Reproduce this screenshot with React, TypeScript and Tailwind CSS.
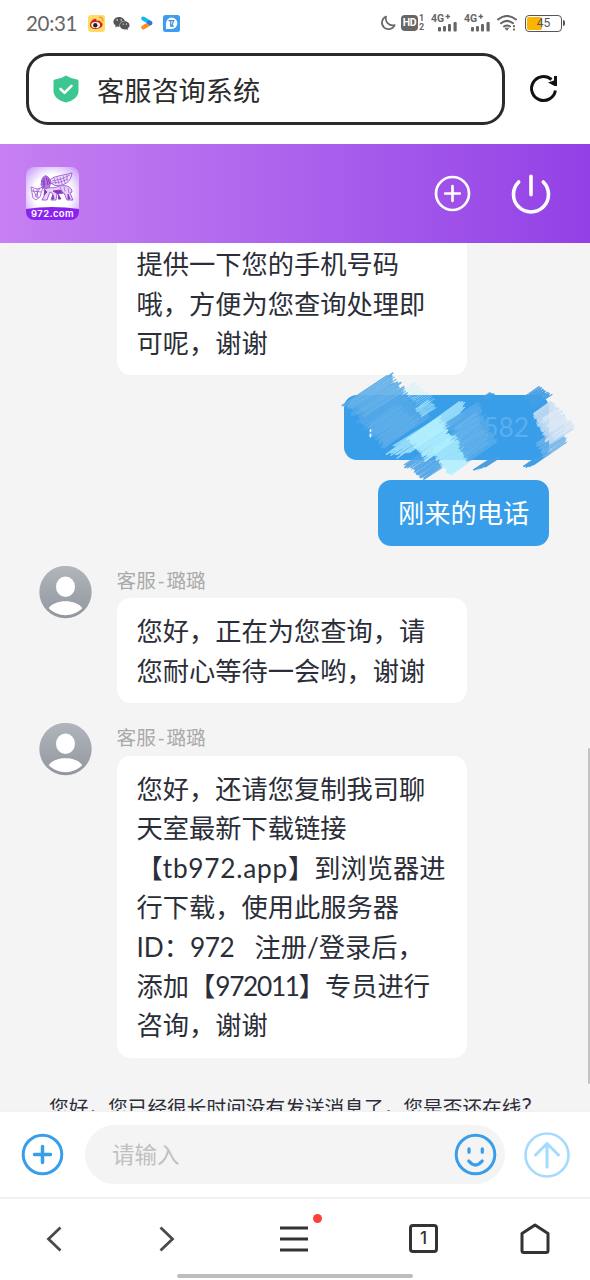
import type { ReactNode } from "react";
import { FaWeibo, FaWeixin } from "react-icons/fa";

const messages: ReactNode[][] = [
  ["您好，正在为您查询，请", "您耐心等待一会哟，谢谢"],
  [
    "您好，还请您复制我司聊",
    "天室最新下载链接",
    <>【<span className="tracking-[0.75px]">tb972.app</span>】到浏览器进</>,
    "行下载，使用此服务器",
    <>ID：<span className="tracking-[-0.5px]">972</span>{"   "}注册/登录后，</>,
    <>添加【<span className="tracking-[-1.3px]">972011</span>】专员进行</>,
    "咨询，谢谢",
  ],
];

// x, y = start of the patch centre line, x2, y2 = its end; h1, h2 = half stroke lengths
const patches = [
  { x: 31, y: 21, x2: 71, y2: 64, h1: 30, h2: 29, n: 80, w: 2, color: "#55a9e8", o: 0.9 },
  { x: 44, y: 48, x2: 66, y2: 66, h1: 22, h2: 24, n: 30, w: 1.2, color: "#6fb8ee", o: 0.45 },
  { x: 30, y: 22, x2: 48, y2: 36, h1: 26, h2: 26, n: 20, w: 1, color: "#86c3ee", o: 0.5 },
  { x: 80, y: 89, x2: 98, y2: 105, h1: 16, h2: 12, n: 26, w: 1.8, color: "#4fa6e8", o: 0.95 },
  { x: 72, y: 19, x2: 92, y2: 35, h1: 8, h2: 9, n: 16, w: 0.9, color: "#b9f0fb", o: 0.7 },
  { x: 86, y: 37, x2: 93, y2: 44, h1: 9, h2: 9, n: 9, w: 1.6, color: "#9ee0fb", o: 0.8 },
  { x: 89, y: 58, x2: 96, y2: 69, h1: 48, h2: 38, n: 24, w: 1.7, color: "#9fe2fb", o: 0.9 },
  { x: 88, y: 60, x2: 104, y2: 82, h1: 20, h2: 18, n: 36, w: 2, color: "#b4f1ff", o: 0.9 },
  { x: 108, y: 74, x2: 124, y2: 100, h1: 17, h2: 13, n: 36, w: 1.9, color: "#aeeeff", o: 0.85 },
  { x: 126, y: 45, x2: 146, y2: 84, h1: 20, h2: 18, n: 60, w: 1.9, color: "#58abe9", o: 0.9 },
  { x: 130, y: 52, x2: 142, y2: 82, h1: 15, h2: 15, n: 24, w: 0.9, color: "#8ccbf3", o: 0.5 },
  { x: 145, y: 97, x2: 157, y2: 94, h1: 11, h2: 9, n: 9, w: 1.7, color: "#4a9fe0", o: 1 },
  { x: 150, y: 27, x2: 154, y2: 29, h1: 5, h2: 5, n: 5, w: 1.5, color: "#429fe5", o: 1 },
  { x: 195, y: 24, x2: 206, y2: 33, h1: 10, h2: 12, n: 14, w: 1.8, color: "#449fe5", o: 1 },
  { x: 194, y: 94, x2: 206, y2: 91, h1: 10, h2: 12, n: 8, w: 1.7, color: "#429fe5", o: 1 },
  { x: 214, y: 66, x2: 219, y2: 82, h1: 18, h2: 14, n: 18, w: 1.5, color: "#6fb3ea", o: 0.9 },
  { x: 206, y: 40, x2: 226, y2: 68, h1: 12, h2: 17, n: 52, w: 1.7, color: "#c9dff3", o: 0.9 },
  { x: 214, y: 46, x2: 229, y2: 64, h1: 12, h2: 13, n: 22, w: 1, color: "#eaf1f7", o: 0.7 },
];

function noise(i: number) {
  const v = Math.sin(i * 127.1 + 31.7) * 43758.5453;
  return v - Math.floor(v);
}

function Scribble() {
  return (
    <svg className="absolute -left-2 -top-[27px] pointer-events-none" width="245" height="116" viewBox="0 0 245 116" fill="none" strokeLinecap="round">
      {patches.map((p, k) => (
        <g key={k} stroke={p.color} opacity={p.o}>
          {Array.from({ length: p.n }).map((_, i) => {
            const t = i / (p.n - 1);
            const s = k * 100 + i;
            const len = p.h1 + (p.h2 - p.h1) * t;
            const a = len * (0.7 + 0.3 * noise(s));
            const b = len * (0.7 + 0.3 * noise(s + 50));
            const dy = 0.52 + 0.1 * noise(s + 23);
            const cx = p.x + (p.x2 - p.x) * t;
            const cy = p.y + (p.y2 - p.y) * t;
            return (
              <path
                key={i}
                strokeWidth={p.w * (0.5 + 0.6 * noise(s + 77))}
                d={`M${cx - a * 0.84} ${cy + a * dy}L${cx + b * 0.84} ${cy - b * dy}`}
              />
            );
          })}
        </g>
      ))}
      <path d="M34.500 62v1M34.500 66.500v2" stroke="#e8f6ff" strokeWidth="1.800" />
    </svg>
  );
}

function Signal() {
  return (
    <div className="relative w-[27px] h-[18px] font-bold font-['Roboto',sans-serif]">
      <span className="absolute left-0 -top-[1px] text-[10.5px] leading-[12px]">4G</span>
      <svg className="absolute left-0 top-0" width="27" height="18" fill="#666">
        <path d="M14.500 2.500h4.600M16.800 .2v4.600" stroke="#666" strokeWidth="1.400" />
        <rect x="7" y="13" width="3" height="4.500" rx="1" />
        <rect x="12" y="12" width="3" height="5.500" rx="1" />
        <rect x="17" y="10" width="3" height="7.500" rx="1" />
        <rect x="22.500" y="8" width="3.200" height="9.500" rx="1" />
      </svg>
    </div>
  );
}

function StatusBar() {
  return (
    <div className="h-[46px] shrink-0 pl-[26px] pr-[28px] flex items-center text-[#666]">
      <span className="w-[62px] text-[20.5px] leading-none tracking-[-0.3px] font-['Lato',sans-serif]">20:31</span>
      <div className="w-[17px] h-[17px] rounded-[3px] bg-[#ffdc65] flex items-center justify-center">
        <svg width="15" height="14" viewBox="0 0 15 14">
          <path d="M1 9C1 5.500 5 2 7 3Q8 3.500 7.500 5Q11.500 3.500 11.500 6Q14 7 13.500 9C12.500 14 1 14.500 1 9z" fill="#d9201e" />
          <ellipse cx="6.700" cy="9" rx="4.400" ry="3.100" fill="#fff" />
          <circle cx="6.300" cy="9.200" r="2.200" fill="#222" />
          <path d="M10 1.200Q14.500 1.200 13.800 5.500" fill="none" stroke="#f29a2c" strokeWidth="1.300" />
        </svg>
      </div>
      <FaWeixin className="ml-[8px]" size={17} color="#555" />
      <svg className="ml-[11px]" width="12" height="14" viewBox="0 0 12 14" fill="none" strokeWidth="4" strokeLinecap="round">
        <path d="M2.200 11.500l7-4.300" stroke="#ff8a1e" />
        <path d="M2.200 2.500l7 4.300" stroke="#19b5f5" />
        <path d="M8 6.500l1.300.6" stroke="#2878e6" />
      </svg>
      <svg className="ml-[10px]" width="17" height="17" viewBox="0 0 17 17">
        <rect width="17" height="17" rx="2.500" fill="#3f9df1" />
        <path d="M3 14V8.500a5.700 5.700 0 1 1 5.700 5.500z" fill="#fff" />
        <path d="M5.500 5.700h2.200V11M7 11.200h4M8.200 5.700h2.600L8.600 11" stroke="#3f8fe0" strokeWidth="1.200" fill="none" />
      </svg>

      <svg className="ml-auto" width="16" height="16" viewBox="0 0 16 16" fill="none" stroke="#666" strokeWidth="1.700" strokeLinejoin="round">
        <path d="M6 1.500A6.600 6.600 0 1 0 14.700 10A7 7 0 0 1 6 1.500z" />
      </svg>
      <div className="ml-[5px] w-[17px] h-[16px] rounded-[4px] bg-[#666] text-white text-[10.5px] leading-[16px] text-center font-bold tracking-[-0.3px] font-['Roboto',sans-serif]">HD</div>
      <div className="ml-[1px] w-[6px] flex flex-col text-[9px] leading-[9px] font-bold font-['Roboto',sans-serif]">
        <span>1</span>
        <span>2</span>
      </div>
      <div className="ml-[6px]"><Signal /></div>
      <div className="ml-[6px]"><Signal /></div>
      <svg className="ml-[6px]" width="20" height="16" viewBox="0 0 20 16" fill="none" stroke="#666" strokeWidth="2" strokeLinecap="round">
        <path d="M1 4.500Q10-2.600 19 4.500M4 8.200Q10 3.500 16 8.200M7 11.500Q10 9.300 13 11.500" />
        <path d="M8.500 13.200h3L10 15z" fill="#666" strokeWidth="1" />
        <path d="M17 11.200v.1M17 14.500v.1" strokeWidth="2.200" />
      </svg>
      <div className="ml-[8px] relative w-[37px] h-[17px] rounded-[4px] border-[1.5px] border-[#555] p-[1px] shrink-0">
        <div className="w-[15px] h-full bg-[#fbb400] rounded-[2px]" />
        <span className="absolute inset-0 text-center text-[12px] leading-[14px] text-[#555] font-['Roboto',sans-serif]">45</span>
        <span className="absolute -right-[4px] top-[4px] w-[2px] h-[6px] bg-[#555] rounded-r" />
      </div>
    </div>
  );
}

function Logo() {
  return (
    <div className="relative w-[53px] h-[53px] rounded-[8px] overflow-hidden bg-radial from-white from-50% to-[#c08af7]">
      <svg className="absolute inset-0" width="53" height="53" viewBox="0 0 53 53" fill="none" stroke="#9a52d2" strokeWidth="0.900" strokeLinejoin="round">
        <path d="M23 15C25 9 35 9 46 6C45 14 40 19 29 18.500z" fill="#efe2fa" />
        <path d="M26 14Q36 13 44 8M26 16Q35 16 42 12M28 11L30 17M31 10l2 7M34 10L36 17M37 9l2 7M41 8L41 14" strokeWidth="0.700" />
        <path d="M16 12q3-6 7-1l2 4-2 6-4 2-4-5z" fill="#b77be0" />
        <path d="M15.500 14l3 1M16.500 17h3M20 10l2 8M22 12l2 5M18 11v10" stroke="#7d2fb8" />
        <path d="M18 23C22 19 27 22 31 20C38 17 46 19 46 25L44 26 47 33H41L38 26 31 27 30 33H25L27 27 24 25 21 33H16L19 27z" fill="#e8d3f7" />
        <path d="M27 24l4 2.500 6-1-3-2.500zM32 27l3 5h-3M19 23l-1 5 3-3zM27 28l-1 4h2zM42 27l2 5h-2z" fill="#8434c4" stroke="#8434c4" />
        <path d="M34 20l2 4M38 19.500l1 5M42 21l1 5" strokeWidth="0.700" />
        <path d="M5 20l6 2 6-2-3 10-4 3-3-2zM7 22l4 9M11 22l1 9M14 21l-5 9M6 24l9 1" strokeWidth="0.800" />
      </svg>
      <svg className="absolute inset-0" width="53" height="53" viewBox="0 0 53 53">
        <path d="M0 42Q26 38 53 42V53H0z" fill="#8a22ef" />
      </svg>
      <span className="absolute left-0 right-0 bottom-0 text-center text-white text-[9.5px] leading-[12px] font-semibold tracking-[0.4px] font-['Inter',sans-serif]">972.com</span>
    </div>
  );
}

function Avatar() {
  return (
    <svg className="shrink-0" width="53" height="53" viewBox="0 0 53 53">
      <defs>
        <linearGradient id="avatar" x1="0" y1="0" x2="0" y2="1">
          <stop stopColor="#b1b5bc" />
          <stop offset="1" stopColor="#92979f" />
        </linearGradient>
      </defs>
      <circle cx="26.500" cy="26" r="26.200" fill="url(#avatar)" />
      <ellipse cx="26.500" cy="20.700" rx="9.500" ry="10.300" fill="#fff" />
      <path d="M9.700 42C16 33 37 33 43.300 42C35 51.500 18 51.500 9.700 42z" fill="#fff" />
    </svg>
  );
}

function Lines({ lines }: { lines: ReactNode[] }) {
  return (
    <>
      {lines.map((line, i) => (
        <div key={i} className="whitespace-pre">{line}</div>
      ))}
    </>
  );
}

export default function App() {
  return (
    <div className="w-[590px] h-[1280px] overflow-hidden bg-white flex flex-col font-['Lato','Noto_Sans_CJK_SC',sans-serif]">
      <StatusBar />

      <div className="h-[98.300px] shrink-0 pl-[26px] pt-[7px] flex items-start">
        <div className="w-[479px] h-[72px] rounded-[22px] border-[3px] border-[#2b2b2b] flex items-center pl-[24px]">
          <svg width="26" height="28" viewBox="0 0 26 28">
            <path d="M13 .5Q18 3.800 24 4.500Q25.500 4.700 25.500 6V16C25.500 22 19.500 26 13 27.500C6.500 26 .5 22 .5 16V6Q.5 4.700 2 4.500Q8 3.800 13 .5z" fill="#3cc690" />
            <path d="M7.500 14l4 3.800 7-7" fill="none" stroke="#fff" strokeWidth="2.600" strokeLinecap="round" strokeLinejoin="round" />
          </svg>
          <span className="ml-[18px] pt-[3px] text-[27.2px] leading-none text-[#2b2b2b]">客服咨询系统</span>
        </div>
        <svg className="ml-[23px] mt-[20px]" width="30" height="32" viewBox="0 0 30 32" fill="none" stroke="#111" strokeWidth="3">
          <path d="M27.400 17.500A12 12 0 1 1 23.500 6.500" />
          <path d="M29 3v10h-2.500L20 9.500l6-2V3z" fill="#111" stroke="none" />
        </svg>
      </div>

      <header className="h-[98.500px] shrink-0 flex items-center px-[26px] bg-linear-to-r from-[#c77ff2] to-[#9340e6]">
        <Logo />
        <svg className="ml-auto" width="37" height="37" viewBox="0 0 37 37" fill="none" stroke="#fff" strokeWidth="2.700" strokeLinecap="round">
          <circle cx="18.500" cy="18.500" r="16.500" />
          <path d="M18.500 11.200v14.600M11.200 18.500h14.600" />
        </svg>
        <svg className="ml-[39px] mr-[12px]" width="42" height="42" viewBox="0 0 42 42" fill="none" stroke="#fff" strokeWidth="3.600" strokeLinecap="round">
          <path d="M21 3.300v18.500M8.700 9A17.500 17.500 0 1 0 33.300 9" />
        </svg>
      </header>

      <main className="relative h-[868.200px] shrink-0 overflow-hidden bg-[#f4f4f4] text-[26.25px] leading-[39.4px] text-[#2b2e38]">
        <div className="ml-[116.500px] w-[350.500px] h-[132.500px] rounded-b-[14px] bg-white pl-5 pt-[2.500px]">
          <Lines lines={["提供一下您的手机号码", "哦，方便为您查询处理即", "可呢，谢谢"]} />
        </div>

        <div className="mt-[19.500px] mr-[41px] flex flex-col items-end gap-5 text-white">
          <div className="relative w-[205px] h-[65.500px] rounded-[13px] bg-[#389eea] px-5 py-[13px] flex justify-between">
            <span className="text-[#3fa1ea]">1</span>
            <span className="text-[#5caeec]">582</span>
            <Scribble />
          </div>
          <div className="w-[171px] h-[65.500px] rounded-[13px] bg-[#389eea] pl-5 py-[14px] whitespace-nowrap">刚来的电话</div>
        </div>

        <div className="mt-5 flex flex-col gap-5">
          {messages.map((lines, i) => (
            <div key={i} className="pl-[39px] flex items-start gap-[24.5px]">
              <Avatar />
              <div>
                <div className="h-[32.700px] text-[19.7px] leading-[29px] text-[#aaa]">
                  客服<span className="inline-block w-[10.500px] text-center">-</span>璐璐
                </div>
                <div className="w-[350.500px] rounded-[14px] bg-white pl-5 pt-[14px] pb-[12px]">
                  <Lines lines={lines} />
                </div>
              </div>
            </div>
          ))}
        </div>

        <p className="mt-[35.500px] pl-[49px] text-[19.7px] leading-[29px] whitespace-nowrap">
          您好，您已经很长时间没有发送消息了，您是否还在线<span className="text-[23px] leading-none">?</span>
        </p>
        <div className="absolute right-0 top-[505px] w-[2px] h-[336px] rounded bg-[#c2c2c2]" />
      </main>

      <div className="h-[88px] shrink-0 bg-white border-t border-b-2 border-[#f1f1f1] flex items-center pl-[21px] pr-[19px] pt-[1px]">
        <svg width="43" height="43" viewBox="0 0 43 43" fill="none" stroke="#389eea" strokeWidth="3" strokeLinecap="round">
          <circle cx="21.500" cy="21.500" r="19.300" />
          <path d="M21.500 13.500v16M13.500 21.500h16" strokeWidth="3.500" />
        </svg>
        <div className="ml-[21px] w-[420px] h-[59px] rounded-full bg-[#f4f4f4] flex items-center justify-between pl-[27px] pr-[8px]">
          <span className="text-[22.5px] text-[#c0c0c0]">请输入</span>
          <svg width="43" height="43" viewBox="0 0 43 43" fill="none" stroke="#389eea" strokeWidth="3" strokeLinecap="round">
            <circle cx="21.500" cy="21.500" r="19.300" />
            <path d="M15 15.800v3.400M28.300 15.800v3.400M14.800 28Q21.500 36 28.200 28" strokeWidth="3.300" />
          </svg>
        </div>
        <svg className="ml-[19px]" width="46" height="46" viewBox="0 0 46 46" fill="none" stroke="#a5daff" strokeWidth="2.600" strokeLinecap="round" strokeLinejoin="round">
          <circle cx="23" cy="23" r="21.500" />
          <path d="M23 35V11.500M11.500 23L23 11.500 34.500 23" strokeWidth="3" />
        </svg>
      </div>

      <nav className="relative h-[81px] shrink-0 bg-white">
        <div className="h-[80px] flex items-center pl-[46px] pr-[40px] justify-between">
          <svg width="17" height="26" viewBox="0 0 17 26" fill="none" stroke="#4a4a4a" strokeWidth="2.800">
            <path d="M14.500 1.500L2.500 13l12 11.500" />
          </svg>
          <svg className="ml-[49px]" width="17" height="26" viewBox="0 0 17 26" fill="none" stroke="#4a4a4a" strokeWidth="2.800">
            <path d="M1.500 1.500L13.500 13 1.500 24.500" />
          </svg>
          <div className="relative ml-[57px]">
            <svg width="28" height="26" viewBox="0 0 28 26" stroke="#333" strokeWidth="3">
              <path d="M0 2h28M0 13h28M0 24h28" />
            </svg>
            <span className="absolute -top-[12px] left-[33px] w-[9px] h-[9px] rounded-full bg-[#fb4138]" />
          </div>
          <div className="ml-[54px] w-[29px] h-[29px] rounded-[4px] border-[3px] border-[#333] flex items-center justify-center text-[17px] leading-none font-medium text-[#333] font-['Inter',sans-serif]">1</div>
          <svg className="ml-[35px]" width="30" height="32" viewBox="0 0 30 32" fill="none" stroke="#333" strokeWidth="3" strokeLinejoin="round">
            <path d="M2 10.500L15 2l13 8.500V27.500Q28 29.500 26 29.500H4Q2 29.500 2 27.500z" />
          </svg>
        </div>
        <div className="absolute left-[177px] bottom-[2px] w-[236px] h-[4px] rounded-full bg-[#bdbdbd]" />
      </nav>
    </div>
  );
}
